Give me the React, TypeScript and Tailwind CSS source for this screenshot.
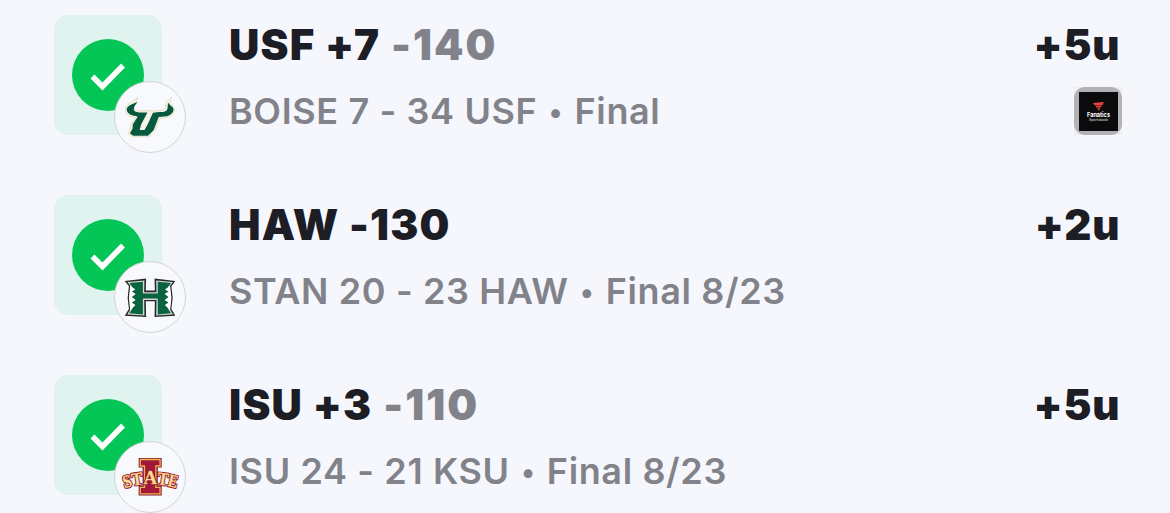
import type { ReactNode } from "react";

function BullsLogo() {
  return (
    <svg viewBox="12 18 216 216" className="h-full w-full">
      <path
        d="M82 66C64 80 45 87 44 101C43 115 54 124 68 127L75 129L61 148L60 160L54 178L67 187L117 187L135 169L151 130L176 127C190 122 199 108 194 96L182 84L187 65C175 74 165 84 168 97C168 104 160 106 148 106L129 108L118 106L91 108L73 104C68 96 76 86 82 66Z"
        fill="#f7f4e6" stroke="#e2ddc2" strokeWidth="3" strokeLinejoin="round"
      />
      <path
        d="M81 80C65 87 50 91 48 102C48 114 60 121 76 123L82 125L67 148L66 162L58 176L68 184L114 184L131 167L147 126L172 124C186 120 195 109 192 100C189 91 179 91 178 82C171 88 178 99 171 106C166 111 155 111 142 111L129 113L113 148L103 166L88 166L93 148L112 112L92 112C79 112 70 109 70 101C70 93 77 87 81 80Z"
        fill="#06583f"
      />
    </svg>
  );
}

function WarriorsLogo() {
  return (
    <svg viewBox="12 18 216 216" className="h-full w-full">
      <path
        d="M42 77L108 69L107 106L135 106L134 69L198 77L186 93L190 128L186 163L198 184L134 188L135 139L107 139L108 188L42 184L55 163L51 128L55 93Z"
        fill="#26282a"
      />
      <path
        d="M50 80L103 75L102 111L140 111L139 75L191 80L181 93L185 128L181 163L191 180L139 183L140 135L102 135L103 183L50 180L60 163L56 128L60 93Z"
        fill="#d3d7d5"
      />
      <path
        d="M56 83L98 79V115H144V79L185 83L176 94L180 128L176 163L185 176L144 180V131H98V180L56 176L65 163L61 128L65 94Z"
        fill="#08633f"
      />
      <path
        d="M59 91L75 103L64 109L76 117L64 126L76 135L64 143L75 151L59 168L55 128ZM182 91L166 103L177 109L165 117L177 126L165 135L177 143L166 151L182 168L186 128Z"
        fill="#ffffff"
      />
    </svg>
  );
}

const stateLetters = [
  { char: "S", x: 54, y: 163, angle: -15, width: 27 },
  { char: "T", x: 83, y: 157, angle: -8, width: 34 },
  { char: "A", x: 121, y: 153, angle: 0, width: 42 },
  { char: "T", x: 158, y: 157, angle: 8, width: 34 },
  { char: "E", x: 187, y: 163, angle: 14, width: 30 },
];

function CyclonesLogo() {
  return (
    <svg viewBox="12 24 216 216" className="h-full w-full">
      <path
        d="M87 75H154V101H142V161H154V187H87V161H99V101H87Z"
        fill="#8f1837" stroke="#7d1831" strokeWidth="4"
      />
      <path
        d="M90 78H151V98H138V164H151V184H90V164H103V98H90Z"
        fill="#a1183a" stroke="#f3b04b" strokeWidth="4"
      />
      <g
        fontFamily="Liberation Serif, serif"
        fontWeight="700"
        fontSize="56"
        textAnchor="middle"
        strokeLinejoin="round"
      >
        {stateLetters.map((l) => (
          <text
            key={`outline-${l.x}`}
            transform={`translate(${l.x} ${l.y}) rotate(${l.angle})`}
            textLength={l.width}
            lengthAdjust="spacingAndGlyphs"
            fill="#8f1837" stroke="#8f1837" strokeWidth="7"
          >
            {l.char}
          </text>
        ))}
        {stateLetters.map((l) => (
          <text
            key={`face-${l.x}`}
            aria-hidden="true"
            transform={`translate(${l.x} ${l.y}) rotate(${l.angle})`}
            textLength={l.width}
            lengthAdjust="spacingAndGlyphs"
            fill="#fbdf9a" stroke="#f5b955" strokeWidth="1"
          >
            {l.char}
          </text>
        ))}
      </g>
    </svg>
  );
}

function FanaticsBadge() {
  return (
    <div className="bg-[#eeeff3]">
      <div className="flex size-12 items-center justify-center rounded-[11px] bg-[#b3b3b7]">
        <svg viewBox="0 0 39 39" className="size-[39px]">
          <rect width="39" height="39" fill="#0b0b0c" />
          <path d="M14 11L25 10L23.5 13H15.5ZM16 13.6H23L21.5 15.6H17.5ZM18 16.2H21.5L19.5 18.5Z" fill="#f0403c" />
          <text x="19.5" y="25" textAnchor="middle" fontFamily="Inter, sans-serif" fontWeight="700" fontSize="6" textLength="23" lengthAdjust="spacingAndGlyphs" fill="#fff">
            Fanatics
          </text>
          <text x="19.5" y="28.8" textAnchor="middle" fontFamily="Inter, sans-serif" fontSize="3.6" textLength="19" lengthAdjust="spacingAndGlyphs" fill="#e4e4e4">
            Sportsbook
          </text>
        </svg>
      </div>
    </div>
  );
}

type Bet = {
  pick: string;
  odds?: string;
  score: string;
  status: string;
  units: string;
  logo: ReactNode;
  book?: ReactNode;
};

const bets: Bet[] = [
  { pick: "USF +7", odds: "-140", score: "BOISE 7 - 34 USF", status: "Final", units: "+5u", logo: <BullsLogo />, book: <FanaticsBadge /> },
  { pick: "HAW -130", score: "STAN 20 - 23 HAW", status: "Final 8/23", units: "+2u", logo: <WarriorsLogo /> },
  { pick: "ISU +3", odds: "-110", score: "ISU 24 - 21 KSU", status: "Final 8/23", units: "+5u", logo: <CyclonesLogo /> },
];

function BetRow({ bet }: { bet: Bet }) {
  return (
    <li className="flex h-[180px] items-start pr-12 pl-[54px]">
      <div className="relative flex h-[120px] w-[108px] shrink-0 items-center justify-center rounded-[14px] bg-[#e0f3ee]">
        <svg viewBox="0 0 72 72" className="size-[72px]">
          <circle cx="36" cy="36" r="36" fill="#03c657" />
          <path d="M20.5 37.5L30.5 47.5L51 26.5" fill="none" stroke="#fff" strokeWidth="5.5" />
        </svg>
        <div className="absolute top-[66px] left-[60px] size-[72px] overflow-hidden rounded-full border border-[#d3d4da] bg-[#f8f9fd]">
          {bet.logo}
        </div>
      </div>
      <div className="ml-[67px] flex-1 whitespace-nowrap">
        <div className="flex h-[60px] gap-[11px] text-[42px] leading-[60px] font-black tracking-[1.2px]">
          <span>{bet.pick}</span>
          {bet.odds && <span className="tracking-[2px] text-[#82838a]">{bet.odds}</span>}
        </div>
        <div className="mt-[6px] h-[60px] text-[36px] leading-[60px] font-semibold tracking-[0.63px] text-[#82838a]">
          {bet.score} <span className="mx-[1.5px] align-[2px] text-[28px] leading-none">•</span> {bet.status}
        </div>
      </div>
      <div className="flex flex-col items-end">
        <div className="h-[60px] pr-[1.5px] text-[42px] leading-[60px] font-black tracking-[0.9px]">{bet.units}</div>
        {bet.book && <div className="mt-3">{bet.book}</div>}
      </div>
    </li>
  );
}

export default function App() {
  return (
    <main className="h-[513px] overflow-hidden bg-[#f6f7fd] pt-[15px] font-['Inter',sans-serif] text-[#1c1d25]">
      <ul>
        {bets.map((bet) => (
          <BetRow key={bet.pick} bet={bet} />
        ))}
      </ul>
    </main>
  );
}
